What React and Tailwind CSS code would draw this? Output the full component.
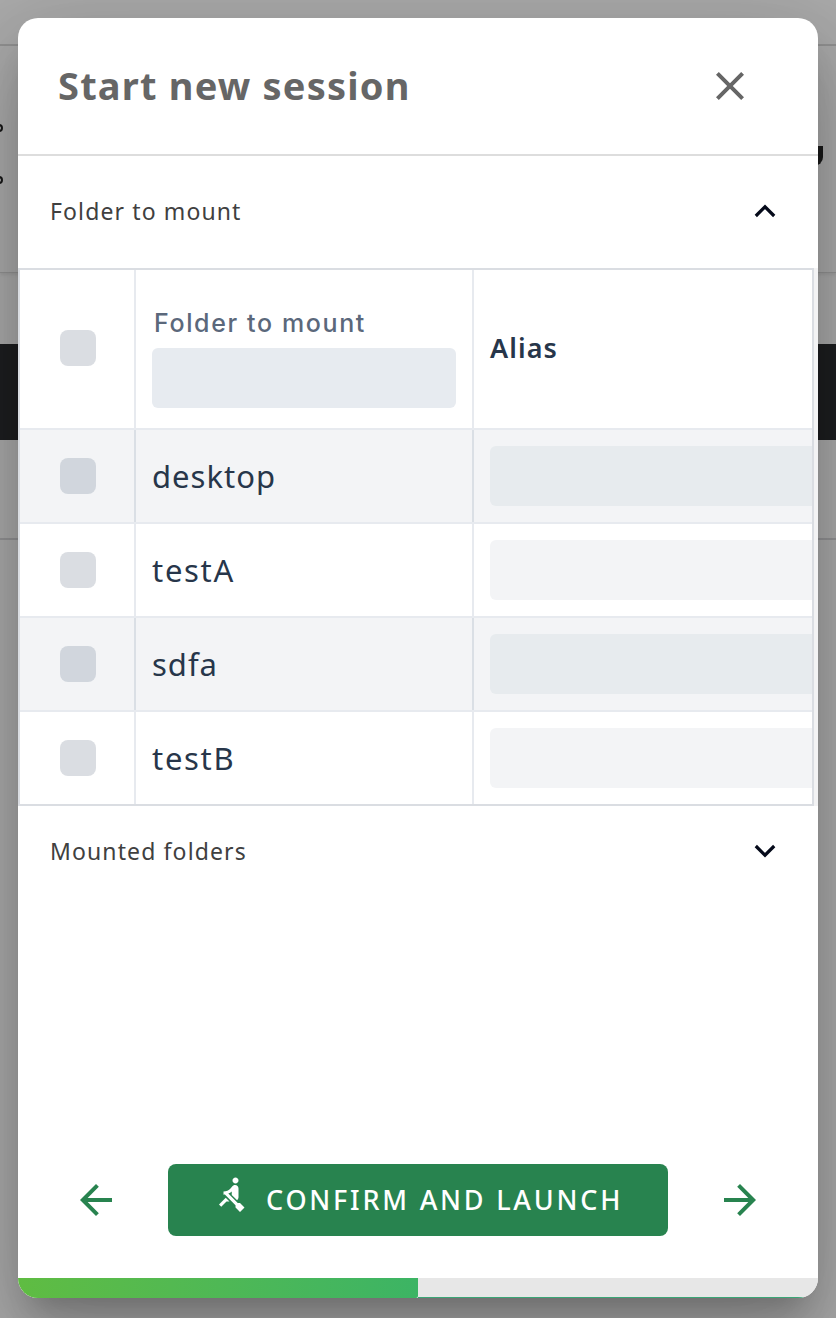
import React from "react";
import { MdRowing, MdClose, MdArrowBack, MdArrowForward } from "react-icons/md";

const rows = ["desktop", "testA", "sdfa", "testB"];

function Backdrop() {
  return (
    <div className="h-full w-full bg-[#aaaaaa] font-['Noto_Sans',sans-serif]">
      <div className="h-[46px] border-b-2 border-[#929292]" />
      <div className="flex h-[227px] justify-between overflow-hidden border-b border-[#929292] shadow-[0_2px_3px_rgba(0,0,0,0.08)]">
        <div className="-ml-[5px] pt-[78px]">
          <div className="size-2 rounded-full border-[2.5px] border-[#181818]" />
          <div className="mt-[44px] size-2 rounded-full border-[2.5px] border-[#181818]" />
        </div>
        <div className="mr-[13px] mt-[100px] h-[20px] w-[14px] rounded-br-[9px] border-b-[5px] border-r-[5px] border-[#191919]" />
      </div>
      <div className="h-[71px]" />
      <div className="h-24 bg-[#1d1e20]" />
      <div className="h-[100px] border-b-2 border-[#929294]" />
    </div>
  );
}

function Checkbox({ shaded }) {
  return <div className={`size-9 rounded-lg ${shaded ? "bg-[#d1d6dd]" : "bg-[#dadde2]"}`} />;
}

function Chevron({ up }) {
  return (
    <svg viewBox="0 0 22 14" className="h-[14px] w-[22px]" fill="none" stroke="#050a1a" strokeWidth="3.2">
      <path d={up ? "M1.8 12 L11 2.8 L20.2 12" : "M1.8 2 L11 11.2 L20.2 2"} />
    </svg>
  );
}

function SectionToggle({ label, up }) {
  return (
    <button
      className={`flex shrink-0 items-center justify-between pb-[2px] pl-8 pr-[42px] text-[23px] tracking-[1.12px] text-[#404040] ${up ? "h-[112px]" : "h-[92px]"}`}
    >
      <span>{label}</span>
      <Chevron up={up} />
    </button>
  );
}

function FolderTable() {
  return (
    <div className="flex h-[538px] bg-[#f3f3f4]">
      <div className="w-[796px] overflow-hidden border-2 border-[#dadde2] bg-white">
        <div className="flex h-[160px] border-b-2 border-[#e7eaef]">
          <div className="flex w-[116px] shrink-0 items-center border-r-2 border-[#e7eaef] pb-[2px] pl-10">
            <Checkbox />
          </div>
          <div className="w-[338px] shrink-0 border-r-2 border-[#e7eaef] pl-4 pt-[36px]">
            <div className="h-[42px] whitespace-nowrap pl-[2px] font-['Inter',sans-serif] text-[25px] font-medium leading-[34px] tracking-[1.62px] text-[#5b687b]">
              Folder to mount
            </div>
            <div className="h-[60px] w-[304px] rounded-md bg-[#e7ebf0]" />
          </div>
          <div className="flex items-center pb-[2px] pl-4 text-[27px] font-semibold tracking-[1.1px] text-[#27364a]">Alias</div>
        </div>
        {rows.map((name, i) => {
          const shaded = i % 2 === 0;
          const line = shaded ? "border-[#dadfe5]" : "border-[#e7eaef]";
          return (
            <div
              key={name}
              className={`flex border-[#e7eaef] ${i < 3 ? "h-[94px] border-b-2" : "h-[92px]"} ${shaded ? "bg-[#f3f4f6]" : "bg-white"}`}
            >
              <div className={`flex w-[116px] shrink-0 items-center border-r-2 pl-10 ${line}`}>
                <Checkbox shaded={shaded} />
              </div>
              <div
                className={`flex w-[338px] shrink-0 items-center border-r-2 pl-4 text-[31px] text-[#27364a] ${line} ${shaded ? "tracking-[1px]" : "tracking-[1.7px]"}`}
              >
                {name}
              </div>
              <div className="flex-1 pl-4 pt-4">
                <div className={`h-[60px] rounded-l-md ${shaded ? "bg-[#e7ebee]" : "bg-[#f3f4f6]"}`} />
              </div>
            </div>
          );
        })}
      </div>
    </div>
  );
}

export default function App() {
  return (
    <div className="relative h-[1318px] w-[836px] overflow-hidden">
      <Backdrop />
      <div className="absolute left-[18px] top-[18px] flex h-[1280px] w-[800px] flex-col overflow-hidden rounded-[20px] bg-white font-['Noto_Sans',sans-serif] shadow-[0_22px_30px_-14px_rgba(0,0,0,0.2),0_48px_76px_6px_rgba(0,0,0,0.14),0_18px_92px_16px_rgba(0,0,0,0.12)]">
        <header className="flex h-[138px] shrink-0 items-center justify-between border-b-2 border-[#dddddd] pl-10 pr-16">
          <h1 className="whitespace-nowrap pb-[2px] text-[38px] font-bold tracking-[1.2px] text-[#666666]">Start new session</h1>
          <MdClose className="size-12 text-[#666666]" />
        </header>
        <SectionToggle label="Folder to mount" up />
        <FolderTable />
        <SectionToggle label="Mounted folders" />
        <div className="flex-1" />
        <footer className="flex h-[72px] shrink-0 items-center justify-between px-[54px] text-[#28834f]">
          <MdArrowBack className="size-12" />
          <button className="flex h-[72px] w-[500px] items-center rounded-lg bg-[#28834f] pl-[45px] text-white">
            <MdRowing className="-mt-3 mr-[17px] size-9" />
            <span className="whitespace-nowrap text-[27px] font-medium tracking-[2.78px]">CONFIRM AND LAUNCH</span>
          </button>
          <MdArrowForward className="size-12" />
        </footer>
        <div className="mt-[42px] flex h-5 shrink-0 bg-[#e7e7e7]">
          <div className="w-[400px] rounded-br-[2px] bg-linear-to-r from-[#5fbc42] to-[#3cb464]" />
          <div className="flex-1 border-b border-[#3ba676]" />
        </div>
      </div>
    </div>
  );
}
